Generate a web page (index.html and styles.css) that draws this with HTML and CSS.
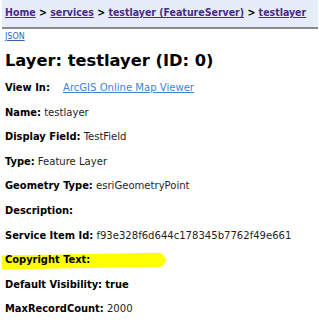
FILE: index.html
```html
<!DOCTYPE html>
<html>
<head>
<meta charset="utf-8">
<link rel="stylesheet" href="styles.css">
</head>
<body>
<div class="nav">
  <a href="#">Home</a> &gt; <a href="#">services</a> &gt; <a href="#">testlayer (FeatureServer)</a> &gt; <a href="#">testlayer</a>
</div>
<div class="content">
  <div class="formats"><a href="#">JSON</a></div>
  <h2 class="title">Layer: testlayer (ID: 0)</h2>
  <div class="row"><b class="label view">View In:</b><a class="viewer" href="#">ArcGIS Online Map Viewer</a></div>
  <div class="row"><b class="label">Name:</b> testlayer</div>
  <div class="row"><b class="label">Display Field:</b> TestField</div>
  <div class="row"><b class="label">Type:</b> Feature Layer</div>
  <div class="row"><b class="label">Geometry Type:</b> esriGeometryPoint</div>
  <div class="row"><b class="label">Description:</b></div>
  <div class="row"><b class="label">Service Item Id:</b> f93e328f6d644c178345b7762f49e661</div>
  <div class="row highlight"><span class="marker"></span><b class="label">Copyright Text:</b></div>
  <div class="row"><b class="label">Default Visibility:</b> <b class="label">true</b></div>
  <div class="row"><b class="label">MaxRecordCount:</b> 2000</div>
</div>
</body>
</html>
```
FILE: styles.css
```css
html, body {
  margin: 0;
  padding: 0;
  background: #fff;
}
body {
  font-family: "DejaVu Sans Condensed", "DejaVu Sans", Verdana, sans-serif;
  font-size: 11.2px;
  color: #1e1e28;
}
.nav {
  margin: 0 1px 0 2px;
  height: 29px;
  box-sizing: border-box;
  padding: 5px 3px 0;
  line-height: 14px;
  white-space: nowrap;
  background: #e5eef8;
  border-bottom: 2px solid #8c8c8c;
  font-family: "DejaVu Sans Condensed", "DejaVu Sans", sans-serif;
  font-weight: bold;
  font-size: 10.5px;
  color: #000;
}
.nav a {
  color: #4b2a8a;
}
.content {
  padding: 0 5px;
}
.formats {
  margin-top: 3px;
  height: 10px;
  line-height: 10px;
  font-family: "DejaVu Sans", sans-serif;
  font-size: 8px;
}
.formats a {
  color: #3366b8;
}
.title {
  margin: 9px 0 10px;
  height: 20px;
  line-height: 20px;
  font-family: "DejaVu Sans", sans-serif;
  font-size: 16.3px;
  font-weight: bold;
  color: #000;
}
.row {
  position: relative;
  height: 24.6px;
  line-height: 14px;
  white-space: nowrap;
}
.label {
  font-family: "DejaVu Sans Condensed", "DejaVu Sans", sans-serif;
  font-size: 11px;
  font-weight: bold;
  color: #000;
}
.view {
  display: inline-block;
  width: 58px;
}
.viewer {
  color: #3f84d8;
}
.marker {
  position: absolute;
  left: -3px;
  top: 1px;
  width: 163px;
  height: 14px;
  background: #ffff00;
  border-radius: 0 7px 5px 0;
  transform: skewY(-1deg);
}
.highlight .label {
  position: relative;
}
```
